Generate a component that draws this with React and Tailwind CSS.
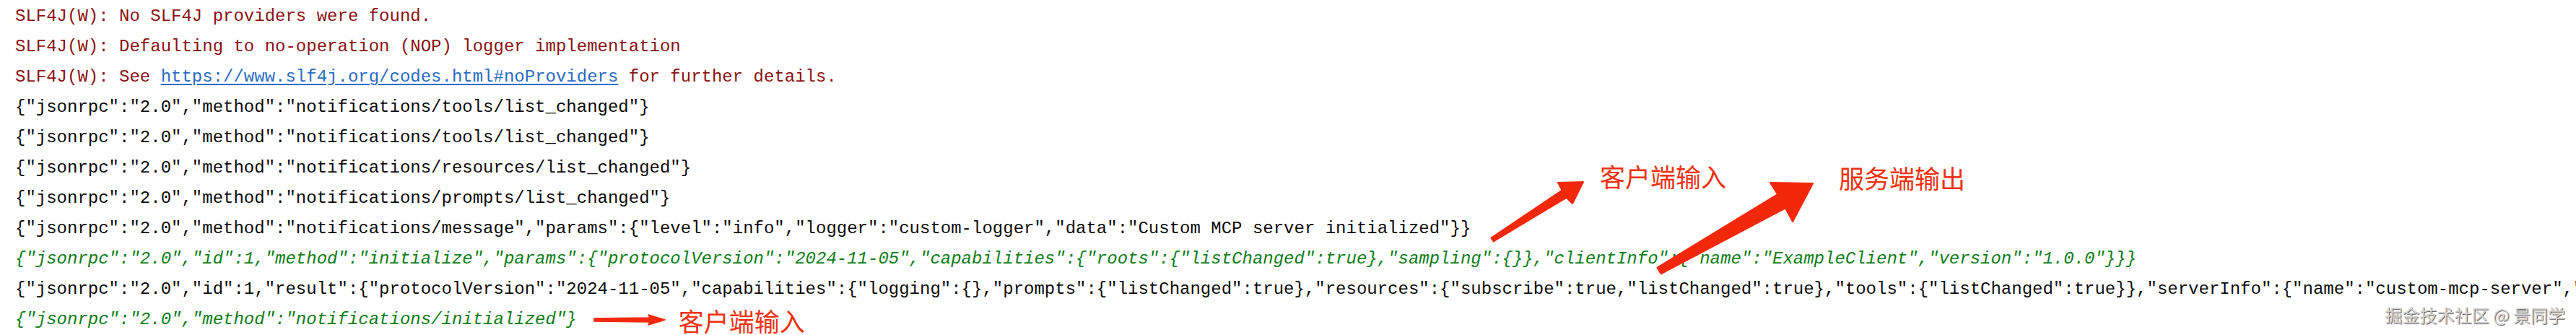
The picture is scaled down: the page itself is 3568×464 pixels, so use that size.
import React from 'react';

const mono = { fontFamily: '"Liberation Mono", "DejaVu Sans Mono", monospace' };
const cjk = { fontFamily: '"Noto Sans CJK SC", sans-serif' };

const lines = [
  { kind: 'err', text: 'SLF4J(W): No SLF4J providers were found.' },
  { kind: 'err', text: 'SLF4J(W): Defaulting to no-operation (NOP) logger implementation' },
  { kind: 'link' },
  { kind: 'out', text: '{"jsonrpc":"2.0","method":"notifications/tools/list_changed"}' },
  { kind: 'out', text: '{"jsonrpc":"2.0","method":"notifications/tools/list_changed"}' },
  { kind: 'out', text: '{"jsonrpc":"2.0","method":"notifications/resources/list_changed"}' },
  { kind: 'out', text: '{"jsonrpc":"2.0","method":"notifications/prompts/list_changed"}' },
  {
    kind: 'out',
    text: '{"jsonrpc":"2.0","method":"notifications/message","params":{"level":"info","logger":"custom-logger","data":"Custom MCP server initialized"}}',
  },
  {
    kind: 'in',
    text: '{"jsonrpc":"2.0","id":1,"method":"initialize","params":{"protocolVersion":"2024-11-05","capabilities":{"roots":{"listChanged":true},"sampling":{}},"clientInfo":{"name":"ExampleClient","version":"1.0.0"}}}',
  },
  {
    kind: 'out',
    text: '{"jsonrpc":"2.0","id":1,"result":{"protocolVersion":"2024-11-05","capabilities":{"logging":{},"prompts":{"listChanged":true},"resources":{"subscribe":true,"listChanged":true},"tools":{"listChanged":true}},"serverInfo":{"name":"custom-mcp-server","version":"1.0.0"}}}',
  },
  { kind: 'in', text: '{"jsonrpc":"2.0","method":"notifications/initialized"}', note: true },
];

// small red hand-drawn style arrow pointing right
const RightArrow = () => (
  <svg width="100" height="20" viewBox="0 0 100 20" className="ml-[23px] shrink-0">
    <polygon
      points="1,8 78,7 76,3 99,10 76,17 78,13 1,12"
      fill="#f3280b"
      stroke="#f3280b"
      strokeWidth="1.5"
      strokeLinejoin="round"
    />
  </svg>
);

const ConsoleLine = ({ line }) => {
  if (line.kind === 'link') {
    return (
      <div className="h-[42px] leading-[42px] text-[#8b1212]">
        SLF4J(W): See{' '}
        <span className="text-[#2a6cc4] underline underline-offset-[3px]">https://www.slf4j.org/codes.html#noProviders</span>{' '}
        for further details.
      </div>
    );
  }
  const color =
    line.kind === 'err' ? 'text-[#8b1212]' : line.kind === 'in' ? 'text-[#0b7d16] italic' : 'text-[#0a0a0a]';
  if (line.note) {
    return (
      <div className="h-[42px] flex items-center">
        <span className={`leading-[42px] ${color}`}>{line.text}</span>
        <RightArrow />
        <span className="ml-[18px] text-[35px] leading-[35px] text-[#f0300f] not-italic" style={cjk}>
          客户端输入
        </span>
      </div>
    );
  }
  return <div className={`h-[42px] leading-[42px] ${color}`}>{line.text}</div>;
};

const Arrows = () => (
  <svg className="absolute inset-0 pointer-events-none" width="3568" height="464" viewBox="0 0 3568 464">
    <g fill="#f3280b" stroke="#f3280b" strokeWidth="2" strokeLinejoin="round">
      <polygon points="2065.4,329.5 2163.5,263.5 2158,253 2193,252 2178,282 2169.9,273.7 2068.6,334.5" />
      <polygon points="2295.5,370.7 2462.1,269.1 2452,253 2511,254 2483,307 2472.9,288.3 2300.5,379.3" />
    </g>
  </svg>
);

const Note = ({ className, children }) => (
  <div className={`absolute text-[35px] leading-[35px] text-[#f0300f] ${className}`} style={cjk}>
    {children}
  </div>
);

export default function App() {
  return (
    <div className="relative w-[3568px] h-[464px] bg-white overflow-hidden">
      <div className="pt-[2px] pl-[21px] text-[24px] whitespace-pre" style={mono}>
        {lines.map((line, i) => (
          <ConsoleLine key={i} line={line} />
        ))}
      </div>

      {/* annotations drawn over the console */}
      <Arrows />
      <Note className="left-[2216px] top-[226px]">客户端输入</Note>
      <Note className="left-[2547px] top-[228px]">服务端输出</Note>

      <div
        className="absolute right-[15px] bottom-[15px] text-[24px] leading-[26px] text-[#d4d4d4] [text-shadow:1px_1px_1px_#555]"
        style={cjk}
      >
        掘金技术社区 @ 景同学
      </div>
    </div>
  );
}
